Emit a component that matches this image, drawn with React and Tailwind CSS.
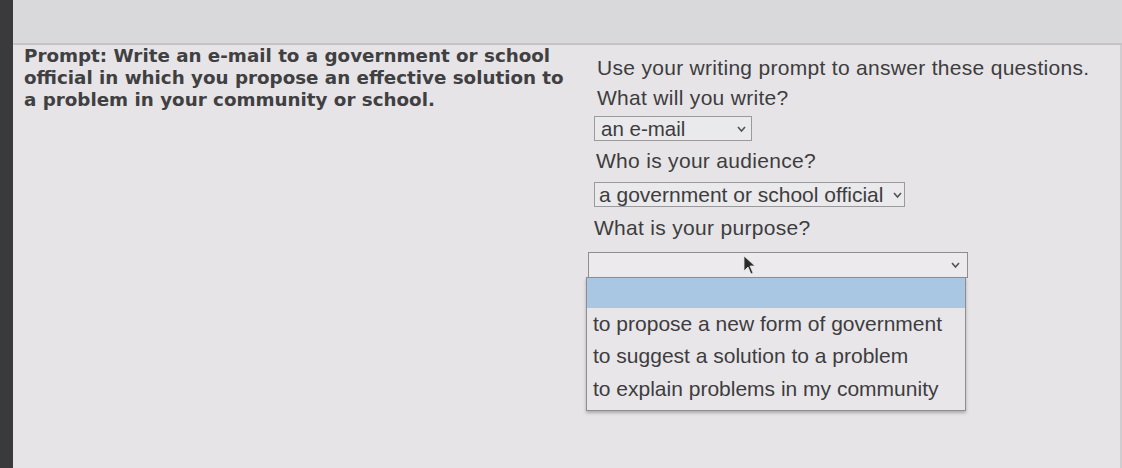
import React from "react";

function Chevron() {
  return (
    <svg width="11" height="8" viewBox="0 0 11 8" className="shrink-0">
      <path d="M2 2 L5.5 6 L9 2" fill="none" stroke="#555" strokeWidth="1.6" />
    </svg>
  );
}

export default function App() {
  return (
    <div
      className="flex h-[468px] w-[1122px] overflow-hidden bg-[#e6e4e6] text-[#3d3d3f]"
      style={{ fontFamily: '"Liberation Sans", Arial, sans-serif' }}
    >
      <div className="w-[13px] shrink-0 bg-[#3a3a3d]" />
      <div className="flex min-w-0 flex-1 flex-col">
        <div className="h-[45px] shrink-0 border-b-2 border-[#c4c3c6] bg-[#d9d8da]" />
        <div className="flex flex-1 border-r-2 border-[#cfcdd0]">
          <div
            className="w-[573px] shrink-0 pl-[11px] pt-[0px] text-[18.3px] font-bold leading-[22px] text-[#404042]"
            style={{ fontFamily: '"DejaVu Sans", Verdana, sans-serif' }}
          >
            <div className="whitespace-nowrap">Prompt: Write an e-mail to a government or school</div>
            <div className="whitespace-nowrap">official in which you propose an effective solution to</div>
            <div className="whitespace-nowrap">a problem in your community or school.</div>
          </div>
          <div className="flex flex-col pt-[11px] text-[21px] leading-[24px] tracking-[0.3px]">
            <div className="pl-[11px]">Use your writing prompt to answer these questions.</div>
            <div className="mt-[6px] pl-[11px]">What will you write?</div>
            <div className="ml-[8px] mt-[6px] flex h-[25px] w-[158px] items-center justify-between border border-[#9a999c] bg-[#eae9eb] pl-[6px] pr-[4px] text-[20.5px] tracking-normal">
              <span>an e-mail</span>
              <Chevron />
            </div>
            <div className="mt-[8px] pl-[10px]">Who is your audience?</div>
            <div className="ml-[8px] mt-[9px] flex h-[25px] w-[311px] items-center justify-between border border-[#9a999c] bg-[#eae9eb] pl-[4px] pr-[1px] text-[21px] tracking-normal">
              <span className="whitespace-nowrap">a government or school official</span>
              <Chevron />
            </div>
            <div className="mt-[9px] pl-[8px]">What is your purpose?</div>
            <div className="relative ml-[2px] mt-[12px] w-[380px]">
              <div className="flex h-[26px] items-center justify-end border border-[#8e8d91] bg-[#eceaec] pr-[6px]">
                <Chevron />
              </div>
              <div className="absolute left-[-2px] top-[25px] w-[380px] border border-[#8e8d91] bg-[#e8e6e9] pb-[4px] text-[21px] tracking-normal shadow-[0_2px_3px_rgba(0,0,0,0.25)]">
                <div className="h-[30px] bg-[#a9c7e2]" />
                <div className="flex h-[32px] items-center whitespace-nowrap pl-[6px]">to propose a new form of government</div>
                <div className="flex h-[32px] items-center whitespace-nowrap pl-[6px]">to suggest a solution to a problem</div>
                <div className="flex h-[34px] items-center whitespace-nowrap pl-[6px]">to explain problems in my community</div>
              </div>
              <svg width="14" height="20" viewBox="0 0 14 20" className="absolute left-[155px] top-[3px]">
                <path d="M1 1 L1 16 L5 12 L8 19 L10 18 L7 11 L12 11 Z" fill="#2a2a2a" stroke="#e6e4e6" strokeWidth="0.8" />
              </svg>
            </div>
          </div>
        </div>
      </div>
    </div>
  );
}
